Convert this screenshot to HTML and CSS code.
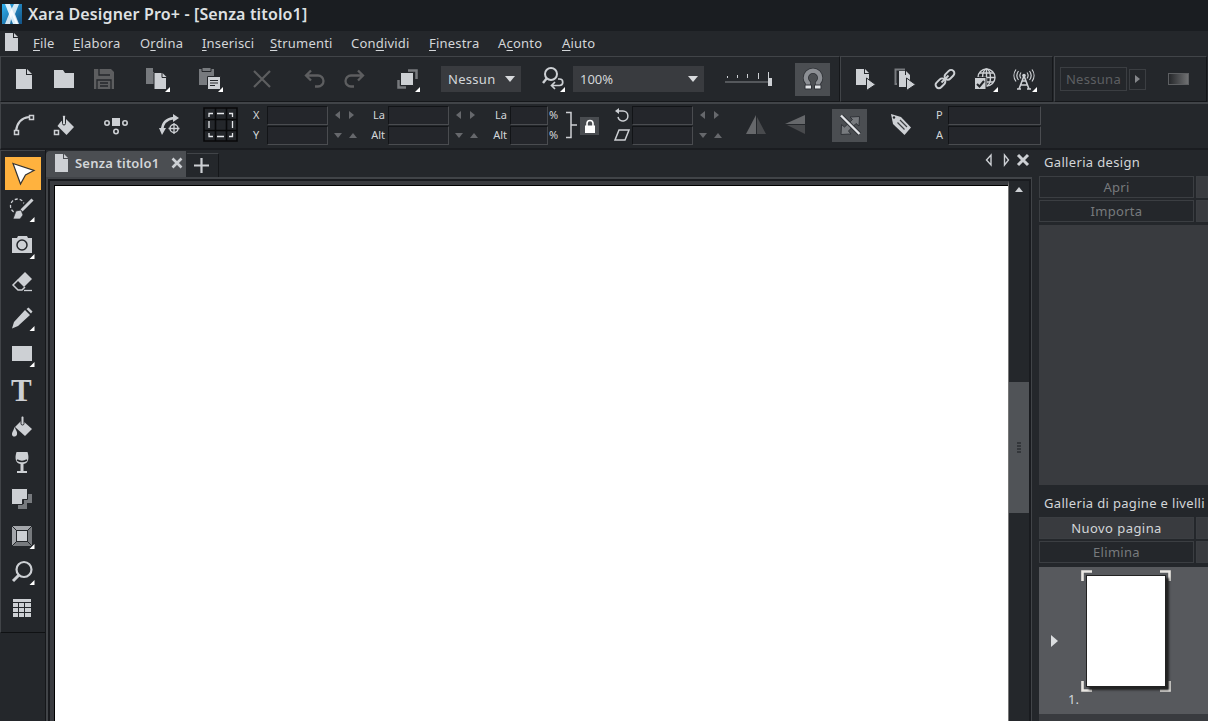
FILE: index.html
```html
<!DOCTYPE html>
<html lang="it">
<head>
  <meta charset="UTF-8">
  <meta name="viewport" content="width=device-width, initial-scale=1.0">
  <title>Xara Designer Pro+ - [Senza titolo1]</title>
  <link rel="stylesheet" href="styles.css">
</head>
<body>
  <div class="titlebar">
    <svg class="logo" width="20" height="20" viewBox="0 0 20 20">
      <defs>
        <linearGradient id="logoBg" x1="0" y1="0" x2="1" y2="1">
          <stop offset="0" stop-color="#2fb0ee"/><stop offset="1" stop-color="#125286"/>
        </linearGradient>
      </defs>
      <rect width="20" height="20" fill="url(#logoBg)"/>
      <path d="M3 0h5l8 20h-5z" fill="#d9effb"/>
      <path d="M12 0h5l-4 10 4 10h-3L10 11 8 20H3l4-10z" fill="#fff" opacity=".8"/>
    </svg>
    <span>Xara Designer Pro+ - [Senza titolo1]</span>
  </div>

  <div class="menubar">
    <svg class="menu-doc" width="14" height="18" viewBox="0 0 14 18"><path d="M0 0h8v5h5v13H0z"/><path d="M9 0l4 4H9z"/></svg>
    <span class="m1"><u>F</u>ile</span>
    <span class="m2"><u>E</u>labora</span>
    <span class="m3">O<u>r</u>dina</span>
    <span class="m4"><u>I</u>nserisci</span>
    <span class="m5"><u>S</u>trumenti</span>
    <span class="m6">Con<u>d</u>ividi</span>
    <span class="m7"><u>F</u>inestra</span>
    <span class="m8">A<u>c</u>onto</span>
    <span class="m9"><u>A</u>iuto</span>
  </div>

  <div class="toolbars">
    <div class="bar group-main">
      <svg class="ico" viewBox="0 0 28 28"><path d="M6 4h10v6h6v14H6z"/><path d="M17 4l5 5h-5z"/></svg>
      <svg class="ico" viewBox="0 0 28 28"><path d="M4 5h9l2 3h9v15H4z"/></svg>
      <svg class="ico off" viewBox="0 0 28 28"><path d="M4 4h17l3 3v17H4z"/><path d="M9 4v6h11M7 24v-9h14v9M10 18h8M10 21h8" fill="none" stroke="#24272b" stroke-width="1.300"/></svg>
      <svg class="ico copy" viewBox="0 0 28 28"><path class="mid" d="M2 3h7v4h4v12H2z"/><path d="M10 7.500h8v5h4.500v12H10z" stroke="#24272b"/><path d="M18.500 8l4 4h-4z"/><path class="more" d="M26 22v5h-5z"/></svg>
      <svg class="ico paste" viewBox="0 0 28 28"><path class="mid" d="M2 4h15v16H2z"/><path d="M5 2.500h9v4H5z" fill="#777a7e" stroke="#24272b"/><path d="M10.500 11.500h13v13h-13z" stroke="#24272b"/><path d="M13 15.500h8M13 18h8M13 20.500h5" stroke="#24272b"/><path class="more" d="M26 22v5h-5z"/></svg>
      <svg class="ico off del" viewBox="0 0 28 28"><path class="line" d="M6 6l16 16M22 6L6 22" stroke-width="2.200"/></svg>
      <svg class="ico off undo" viewBox="0 0 28 28"><path class="line" d="M11 5.500l-5 5 5 5M7 10.500h11a5 5 0 0 1 0 11h-3" stroke-width="2.300"/></svg>
      <svg class="ico off" viewBox="0 0 28 28"><path class="line" d="M18 5.500l5 5-5 5M22 10.500H11a5 5 0 0 0 0 11h3" stroke-width="2.300"/></svg>
      <svg class="ico arrange" viewBox="0 0 28 28"><path d="M14 5.500h8.500V14M4.500 15v7.500H12" fill="none" stroke="#777a7e" stroke-width="2.500"/><path d="M6.500 7.500h13v13h-13z" stroke="#24272b"/><path class="more" d="M26 22v5h-5z"/></svg>
      <div class="combo combo-q"><span>Nessun</span><i class="down"></i></div>
      <svg class="ico zoomprev" viewBox="0 0 28 28"><circle class="line" cx="12" cy="9" r="6" stroke-width="2"/><path class="line" d="M8 13l-4 5" stroke-width="2.400"/><path class="line" d="M19 14h1.500a3 3 0 0 1 0 6.500H13M16 17l-3.500 3.500L16 24" stroke-width="1.700"/><path class="more" d="M26 22v5h-5z"/></svg>
      <div class="combo combo-zoom"><span>100%</span><i class="down"></i></div>
      <svg class="slider" width="50" height="18" viewBox="0 0 50 18"><path d="M0 12h44" stroke="#55585c" stroke-width="2"/><path d="M2.500 6v2M12.500 5v3M22.500 4v4M33.500 3v6M43.500 2v6" stroke="#cdd0d4"/><path d="M43 8h4v8h-4z"/></svg>
      <div class="toggle magnet"><svg class="ico" viewBox="0 0 28 28"><path d="M9 22v-4c-1.500-1.500-2.200-3-2.200-5a7.200 7.200 0 0 1 14.400 0c0 2-.7 3.500-2.200 5v4" fill="none" stroke="#303338" stroke-width="6"/><path d="M9 22v-4c-1.500-1.500-2.200-3-2.200-5a7.200 7.200 0 0 1 14.400 0c0 2-.7 3.500-2.200 5v4" fill="none" stroke="#8c8f94" stroke-width="4.400"/><path d="M6 20h6.500v4H6zM15.500 20H22v4h-6.500z" fill="#e0e3e6" stroke="#303338"/></svg></div>
    </div>
    <div class="bar group-web">
      <svg class="ico" viewBox="0 0 28 28"><path d="M5 4h8v5h5v11H5z"/><path d="M14 4l4 4h-4z"/><path d="M15.500 13l9 6.500-9 6z" stroke="#24272b"/></svg>
      <svg class="ico" viewBox="0 0 28 28"><path d="M6 19H4.500V4.500H14" fill="none" stroke="#777a7e" stroke-width="2"/><path d="M8 6h6v4h5v12H8z"/><path d="M15 6l4 4h-4z"/><path d="M15.500 13l9 6.500-9 6z" stroke="#24272b"/></svg>
      <svg class="ico" viewBox="0 0 28 28"><g class="line" stroke-width="2"><rect x="13" y="6.500" width="11" height="6.500" rx="3.200" transform="rotate(-45 18.500 9.800)"/><rect x="4" y="15" width="11" height="6.500" rx="3.200" transform="rotate(-45 9.500 18.300)"/><path d="M10.500 17.500l7-7"/></g></svg>
      <svg class="ico" viewBox="0 0 28 28"><g class="line" stroke-width="1.400"><circle cx="15.500" cy="12.500" r="8.500"/><ellipse cx="15.500" cy="12.500" rx="4" ry="8.500"/><path d="M15.500 4v17M7 12.500h17M9 8h13M9 17h13"/></g><path d="M3.500 12.500h11.500v12H3.500z" stroke="#24272b"/><path d="M6 19l2.500 2.500L13 16" fill="none" stroke="#24272b" stroke-width="2"/><path class="more" d="M27 22v5h-5z"/></svg>
      <svg class="ico antenna" viewBox="0 0 28 28"><g class="line" stroke-width="1.600"><path d="M8 24l5-13 5 13M9 20h8M11 16h4M6 24h4M16 24h4"/><path d="M10 7.500a5 5 0 0 0 0 6M7.500 6a7.500 7.500 0 0 0 0 9M5 4.500a10 10 0 0 0 0 12M16 7.500a5 5 0 0 1 0 6M18.500 6a7.500 7.500 0 0 1 0 9M21 4.500a10 10 0 0 1 0 12" stroke-width="1.200"/></g><circle cx="13" cy="10.500" r="1.800"/><path class="more" d="M26 22v5h-5z"/></svg>
    </div>
    <div class="bar group-name">
      <div class="namebox">Nessuna</div>
      <div class="namearrow"><i class="right"></i></div>
      <div class="gradient"></div>
    </div>
  </div>

  <div class="infobar">
    <svg class="ico" viewBox="0 0 28 28"><path class="line" d="M6 20C7 12 11 7 19 6" stroke-width="2.200"/><path d="M4.500 19.500h4v4h-4zM19.500 4.500h4v4h-4z" fill="#24272b" stroke="#cdd0d4" stroke-width="1.500"/></svg>
    <svg class="ico" viewBox="0 0 28 28"><path d="M15 7l9 9-7.500 8-9-9 3-4z"/><rect x="12.500" y="4" width="3" height="10" rx="1.500" fill="#cdd0d4" stroke="#24272b"/><path d="M4.500 19.500h4v4h-4z" fill="#24272b" stroke="#cdd0d4" stroke-width="1.500"/></svg>
    <svg class="ico nodes" viewBox="0 0 28 28"><path d="M10 7h8v8h-8z"/><g class="line" stroke-width="1.600"><circle cx="5" cy="12" r="2.200"/><circle cx="23" cy="12" r="2.200"/><circle cx="14" cy="20.500" r="2.200"/></g></svg>
    <svg class="ico rot" viewBox="0 0 28 28"><path class="line" d="M6 20C6 13 10 8 18 7" stroke-width="2.400"/><path d="M17 3l6 4-6 4zM3 17h7l-4 7z"/><circle class="line" cx="18" cy="17.500" r="4" stroke-width="1.500"/><path class="line" d="M12.500 17.500h11M18 12v11" stroke-width="1.300"/></svg>
    <svg class="refgrid" width="36" height="36" viewBox="0 0 36 36"><path d="M1 1h33v33H1zM12.500 1v33M23.500 1v33M1 12.500h33M1 23.500h33" fill="none" stroke="#08090a" stroke-width="1.600"/><path d="M6 10V6.500h4M14 6.500h7M26 6.500h3.500V10M6 14v7M29.500 14v7M6 26v3.500h4M14 29.500h7M26 29.500h3.500V26" fill="none" stroke="#e4e6e9" stroke-width="1.300"/></svg>

    <div class="fields xy">
      <label>X</label><div class="field"></div><div class="spin"><i class="left"></i><i class="right"></i></div>
      <label>Y</label><div class="field"></div><div class="spin"><i class="down"></i><i class="up"></i></div>
    </div>
    <div class="fields size">
      <label>La</label><div class="field"></div><div class="spin"><i class="left"></i><i class="right"></i></div>
      <label>Alt</label><div class="field"></div><div class="spin"><i class="down"></i><i class="up"></i></div>
    </div>
    <div class="fields scale">
      <label>La</label><div class="field"></div><span>%</span>
      <label>Alt</label><div class="field"></div><span>%</span>
    </div>
    <svg class="bracket" width="13" height="28" viewBox="0 0 13 28"><path class="line" d="M1 1.500h5v25H1M6 14h6" stroke-width="1.500"/></svg>
    <div class="lock"><svg width="12" height="14" viewBox="0 0 12 14"><path d="M3 7V4.500a3 3 0 0 1 6 0V7" fill="none" stroke="#fff" stroke-width="1.600"/><path d="M1 6.500h10V14H1z" fill="#fff"/></svg></div>
    <div class="fields angle">
      <svg width="16" height="16" viewBox="0 0 16 16"><path class="line" d="M3.500 4H9a5 5 0 1 1-5 6" stroke-width="1.500"/><path d="M1 4l4-3v6z"/></svg><div class="field"></div><div class="spin"><i class="left"></i><i class="right"></i></div>
      <svg width="16" height="16" viewBox="0 0 16 16"><path class="line" d="M5 3h10l-4 10H1z" stroke-width="1.500"/></svg><div class="field"></div><div class="spin"><i class="down"></i><i class="up"></i></div>
    </div>
    <svg class="ico flip-h" viewBox="0 0 28 28"><path class="mid2" d="M14 4v19H4z"/><path class="dim" d="M15 6l9 17h-9z"/></svg>
    <svg class="ico" viewBox="0 0 28 28"><path class="mid2" d="M24 4v9H4z"/><path class="dim" d="M6 14h18v9z"/></svg>
    <div class="toggle scalelines"><svg class="ico" viewBox="0 0 28 28"><path class="mid" d="M14 6l9.500-.5-.5 9.500-3-2.500-7.500 7.500 2.500 3-10 .5.500-10 3 2.500 8-7.500z" stroke="#303338"/><path d="M5.500 5l18 18" stroke="#303338" stroke-width="4.500"/><path d="M5 4.500l18.500 18.500" stroke="#e4e6e9" stroke-width="2.400"/></svg></div>
    <svg class="ico tag" viewBox="0 0 28 28"><path d="M4 3l10 3 10 10.500-6.500 7.500L6 13z"/><circle cx="7" cy="6.500" r="1.200" fill="#24272b"/><path d="M10.500 11.500l7 7M13 9l7 7" stroke="#3c3f43" stroke-width="1.200"/></svg>
    <div class="fields pa">
      <label>P</label><div class="field"></div>
      <label>A</label><div class="field"></div>
    </div>
  </div>

  <div class="work">
    <div class="side">
      <div class="toolbox">
        <div class="tool active"><svg class="ico" viewBox="0 0 28 28"><path d="M4 3.500l21 7-8.500 4.500L11.500 24z" fill="#fff" stroke="#333" stroke-width="1.200"/></svg></div>
        <div class="tool"><svg class="ico" viewBox="0 0 28 28"><circle class="line" cx="9.500" cy="11" r="7" stroke-width="1.300" stroke-dasharray="3 2"/><path class="bgline" d="M13 16L24 4" stroke-width="6"/><path class="line" d="M13.500 15.500L24.500 4.500" stroke-width="3"/><path d="M5 24l3-8 5-1 2 5-3 4z" stroke="#24272b" stroke-width=".7"/><path class="more" d="M26.500 22v5h-5z"/></svg></div>
        <div class="tool"><svg class="ico" viewBox="0 0 28 28"><path d="M4 6h5l1-2h9l1 2h4v15H4z"/><circle cx="14" cy="13" r="5" fill="none" stroke="#24272b" stroke-width="1.500"/><path class="more" d="M26.500 22v5h-5z"/></svg></div>
        <div class="tool"><svg class="ico" viewBox="0 0 28 28"><path d="M17 4l7 7-8 8-7-7z"/><path class="line" d="M10 12l-5 5 5 5h4l3-3" stroke-width="1.500"/><path class="line" d="M16 22.500h8" stroke-width="1.300"/></svg></div>
        <div class="tool"><svg class="ico" viewBox="0 0 28 28"><path d="M17 6l5 5L10 22l-6 2.500 2-6.500zM18.500 5l2-1.500 4 4-1.500 2z"/><path class="more" d="M26.500 22v5h-5z"/></svg></div>
        <div class="tool"><svg class="ico" viewBox="0 0 28 28"><path d="M4 6h20v15H4z"/><path class="more" d="M26.500 22v5h-5z"/></svg></div>
        <div class="tool tool-text">T</div>
        <div class="tool"><svg class="ico" viewBox="0 0 28 28"><path d="M14 7l10 9-7 7-10-9z"/><rect x="13" y="3" width="3" height="9" rx="1.500" stroke="#24272b"/><path d="M6.500 14c2 4 3 5 2.500 7.500C8 24.500 4 24 4 21.500 4 19 5.500 18 6.500 14z"/></svg></div>
        <div class="tool"><svg class="ico" viewBox="0 0 28 28"><path d="M8.500 3h11c2 6 1 11.500-4 12v7H19v2H9v-2h3.500v-7c-5-.5-6-6-4-12z"/><path d="M9 11q5 3 10 0" fill="none" stroke="#24272b" stroke-width="1.500"/></svg></div>
        <div class="tool"><svg class="ico" viewBox="0 0 28 28"><path class="mid" d="M10 24v-5h6v-10h8v9h-5v6z"/><path d="M3.500 3.500h16v11h-5v5h-11z" stroke="#24272b"/></svg></div>
        <div class="tool"><svg class="ico" viewBox="0 0 28 28"><path d="M4 4h20v20H4z" fill="#777a7e"/><path d="M4 4h20l-5 5H9v10l-5 5z" fill="#a3a6aa"/><path d="M8.500 8.500h11v11h-11z" stroke="#24272b"/><path d="M4 4l5 5M24 4l-5 5M4 24l5-5M24 24l-5-5" stroke="#24272b"/><path class="more" d="M26.500 22v5h-5z"/></svg></div>
        <div class="tool"><svg class="ico" viewBox="0 0 28 28"><circle class="line" cx="16" cy="11.500" r="7.500" stroke-width="2.200"/><path class="line" d="M11 17l-6 6" stroke-width="3"/><path class="more" d="M26.500 22v5h-5z"/></svg></div>
        <div class="tool"><svg class="ico" viewBox="0 0 28 28"><path d="M5 5h18v18H5z"/><path d="M5 8.500h18M5 13.500h18M5 18.500h18M10.500 9v14M16.500 9v14" stroke="#24272b"/></svg></div>
      </div>
    </div>

    <div class="document">
      <div class="tabs">
        <div class="tab">
          <svg width="14" height="18" viewBox="0 0 14 18"><path d="M0 0h8v5h5v13H0z"/><path d="M9 0l4 4H9z"/></svg>
          <span>Senza titolo1</span>
          <svg width="12" height="12" viewBox="0 0 12 12"><path class="line" d="M1.500 1.500l9 9M10.500 1.500l-9 9" stroke-width="2.600"/></svg>
        </div>
        <div class="newtab"><svg width="15" height="15" viewBox="0 0 15 15"><path d="M0 7.500h15M7.500 0v15" stroke="#cdd0d4" stroke-width="2.200"/></svg></div>
        <svg class="tabnav" width="46" height="14" viewBox="0 0 46 14"><path class="line" d="M7 2v10L2.500 7zM20.500 2v10l4-5z" stroke-width="1.400"/><path class="line" d="M34 2l10 10M44 2L34 12" stroke-width="3"/></svg>
      </div>
      <div class="frame">
        <div class="canvas"></div>
        <div class="scroll">
          <i class="up"></i>
          <div class="thumb"><b></b><b></b><b></b><b></b></div>
        </div>
      </div>
    </div>

    <div class="galleries">
      <h2>Galleria design</h2>
      <div class="buttons">
        <div class="btn dis">Apri</div><div class="btn"></div>
        <div class="btn dis">Importa</div><div class="btn"></div>
      </div>
      <div class="gallery"></div>
      <h2 class="pages-title">Galleria di pagine e livelli</h2>
      <div class="buttons">
        <div class="btn">Nuovo pagina</div><div class="btn"></div>
        <div class="btn dis">Elimina</div><div class="btn"></div>
      </div>
      <div class="pages">
        <i class="right"></i>
        <span class="num">1.</span>
        <div class="selection">
          <svg width="90" height="122" viewBox="0 0 90 122"><path d="M1.500 11V1.500H11M79 1.500h9.500V11M88.500 111v9.500H79M11 120.500H1.500V111" fill="none" stroke="#e9e6e2" stroke-width="2.600"/></svg>
          <div class="page"></div>
        </div>
      </div>
      <div class="rest"></div>
    </div>
  </div>
</body>
</html>
```
FILE: styles.css
```css
:root {
  --bg: #24272b;
  --dark: #15171a;
  --line: #414448;
  --panel: #393b3f;
  --active: #4b4e52;
  --icon: #cdd0d4;
}
* {
  box-sizing: border-box;
}
body {
  margin: 0;
  height: 721px;
  overflow: hidden;
  display: flex;
  flex-direction: column;
  background: var(--bg);
  color: #d3d6d9;
  font-family: "Noto Sans", "Open Sans", sans-serif;
  font-size: 13px;
}
svg {
  display: block;
  flex: none;
  fill: var(--icon);
}
.line {
  fill: none;
  stroke: var(--icon);
}
.bgline { stroke: var(--bg); }
.mid { fill: #777a7e; }
.mid2 { fill: #66686b; }
.dim { fill: #484a4d; }
.more { fill: #fff; }
.off { fill: #5d5e60; }
.off .line { stroke: #5d5e60; }
.ico {
  width: 28px;
  height: 28px;
  margin: 0 6px;
}

/* small triangles */
i {
  width: 0;
  height: 0;
  border: 4px solid transparent;
}
i.down { border-top: 5px solid #66686c; border-bottom: 0; }
i.up { border-bottom: 5px solid #66686c; border-top: 0; }
i.left { border-right: 5px solid #66686c; border-left: 0; }
i.right { border-left: 5px solid #66686c; border-right: 0; }

/* title and menu */
.titlebar {
  height: 31px;
  flex: none;
  display: flex;
  align-items: center;
  gap: 6px;
  padding: 0 2px 4px;
  background: #1a1d21;
  color: #dfe1e3;
  font-size: 16px;
  font-weight: 600;
  letter-spacing: .15px;
}
.titlebar span { padding-top: 1px; }
.menubar {
  height: 25px;
  flex: none;
  display: flex;
  align-items: center;
  padding: 0 0 1px 5px;
  letter-spacing: .2px;
}
.menubar span {
  flex: none;
  white-space: nowrap;
}
.menubar u { text-underline-offset: 2px; }
.menu-doc { margin: -2px 14px 0 0; }
.m1 { width: 40px; }
.m2 { width: 67px; }
.m3 { width: 62px; }
.m4 { width: 68px; }
.m5 { width: 81px; }
.m6 { width: 78px; }
.m7 { width: 69px; }
.m8 { width: 64px; }

/* toolbars */
.toolbars {
  display: flex;
  height: 46px;
  flex: none;
}
.bar {
  display: flex;
  align-items: center;
  border-top: 1px solid var(--line);
  border-left: 1px solid var(--line);
  border-bottom: 1px solid var(--dark);
  border-right: 1px solid var(--dark);
}
.group-main { width: 840px; padding-left: 3px; }
.group-web { width: 213px; padding-left: 4px; }
.group-name { width: 153px; margin-left: 1px; padding-left: 5px; }
.copy { margin-left: 20px; }
.paste { margin-left: 19px; }
.del { margin-left: 17px; }
.undo { margin-left: 18px; }
.arrange { margin-left: 20px; }
.combo {
  height: 26px;
  flex: none;
  display: flex;
  align-items: center;
  justify-content: space-between;
  padding: 0 6px 1px 7px;
  background: var(--panel);
  letter-spacing: .3px;
}
.combo i.down {
  border-width: 6px 5px 0;
  border-top-color: #d8dadd;
}
.combo-q { width: 80px; margin-left: 13px; }
.zoomprev { margin-left: 18px; }
.combo-zoom { width: 131px; letter-spacing: 0; }
.slider { margin: 0 20px 0 21px; }
.toggle {
  width: 35px;
  height: 33px;
  flex: none;
  display: flex;
  align-items: center;
  justify-content: center;
  background: var(--active);
}
.toggle .ico { margin: 0; }
.namebox,
.namearrow {
  height: 24px;
  display: flex;
  align-items: center;
  justify-content: center;
  border: 1px solid #3b3e42;
  color: #5d5f62;
}
.namebox { width: 67px; letter-spacing: .3px; }
.namearrow { width: 17px; margin-left: 2px; height: 21px; }
.namearrow i.right { border-left-color: #85878b; }
.gradient {
  width: 21px;
  height: 12px;
  margin-left: 22px;
  border: 1px solid #5d5f62;
  background: linear-gradient(90deg, #26282b, #707173);
}

.infobar {
  height: 48px;
  flex: none;
  display: flex;
  align-items: center;
  padding: 0 0 2px 3px;
  border-top: 2px solid var(--line);
  border-left: 1px solid var(--line);
  border-bottom: 2px solid #1a1c20;
}
.nodes { margin-left: 18px; }
.rot { margin-left: 20px; margin-right: 0; }
.refgrid { margin-left: 19px; }
.fields {
  flex: none;
  display: grid;
  grid-template-rows: 19px 19px;
  row-gap: 1px;
  align-items: center;
  font-size: 11px;
  line-height: 18px;
}
.field {
  height: 19px;
  background: #24262b;
  border: 1px solid #121417;
  border-right-color: #4a4c50;
  border-bottom-color: #4a4c50;
}
.spin {
  display: flex;
  gap: 9px;
  padding-left: 7px;
  align-items: center;
}
.spin i.down,
.spin i.up {
  margin: 0 -1px;
}
.xy { margin-left: 14px; grid-template-columns: 14px 61px 43px; }
.size { grid-template-columns: 17px 61px 44px; }
.size label,
.scale label {
  padding-right: 3px;
  text-align: right;
}
.scale { grid-template-columns: 17px 38px 17px; }
.scale span { padding-left: 1px; }
.bracket { margin-left: 0; }
.lock {
  width: 19px;
  height: 18px;
  margin: 2px 15px 0 2px;
  display: flex;
  align-items: center;
  justify-content: center;
  background: #494c50;
}
.angle { grid-template-columns: 18px 61px 42px; }
.flip-h { margin-left: 7px; }
.flip-h + .ico { margin-left: 5px; }
.scalelines { margin: 0 14px 0 17px; }
.tag { margin-right: 21px; }
.pa { grid-template-columns: 12px 93px; }

/* work area */
.work {
  flex: 1;
  min-height: 0;
  display: flex;
}
.side {
  width: 46px;
  flex: none;
  border-right: 1px solid var(--dark);
}
.toolbox {
  height: 483px;
  padding-top: 4px;
  border-left: 1px solid var(--line);
  border-top: 1px solid var(--line);
  border-bottom: 1px solid #0f1113;
}
.tool {
  height: 36.25px;
  display: flex;
  align-items: center;
  padding-left: 1px;
}
.tool.active {
  width: 36px;
  height: 33px;
  margin: 2px 0 1.25px 4px;
  background: #ffb23e;
}
.tool.active .ico { margin: 0 0 0 3px; }
.tool-text {
  padding-left: 10px;
  color: var(--icon);
  font: bold 31px/30px "Liberation Serif", serif;
}
.document {
  width: 986px;
  flex: none;
  display: flex;
  flex-direction: column;
}
.tabs {
  height: 27px;
  flex: none;
  display: flex;
  align-items: flex-end;
}
.tab {
  width: 140px;
  height: 26px;
  display: flex;
  align-items: center;
  gap: 6px;
  padding: 0 0 2px 9px;
  border-radius: 4px 0 0 0;
  background: var(--active);
}
.tab span {
  width: 90px;
  font-weight: 600;
  letter-spacing: .2px;
  white-space: nowrap;
}
.newtab {
  width: 32px;
  height: 24px;
  margin-left: 1px;
  padding: 4px 0 0 7px;
  border-top: 1px solid var(--line);
  border-right: 1px solid var(--dark);
}
.tabnav { margin: 0 0 10px 765px; }
.frame {
  flex: 1;
  display: flex;
  border: 2px solid var(--line);
  border-bottom: 0;
  border-right-width: 1px;
  background: #191b1f;
  padding: 2px 0 0 2px;
}
.canvas {
  width: 959px;
  flex: none;
  background: #fff;
  border: 4px solid var(--panel);
  border-right: 1px solid #777;
  border-bottom: 0;
  box-shadow: inset 1px 1px 0 #000;
}
.scroll {
  flex: 1;
  display: flex;
  flex-direction: column;
  align-items: center;
  padding-top: 6px;
  background: var(--bg);
  border-right: 2px solid #191b1f;
}
.scroll i.up { border-bottom-color: #cdd0d4; }
.thumb {
  width: 20px;
  height: 131px;
  margin-top: 190px;
  display: flex;
  flex-direction: column;
  align-items: center;
  justify-content: center;
  gap: 1px;
  background: #505357;
}
.thumb b {
  width: 4px;
  height: 2px;
  background: #34373b;
}

/* right galleries */
.galleries {
  flex: 1;
  min-width: 0;
  padding-left: 7px;
  display: flex;
  flex-direction: column;
}
h2 {
  height: 26px;
  flex: none;
  margin: 0;
  padding-left: 5px;
  font-size: 13px;
  font-weight: 400;
  letter-spacing: .33px;
  line-height: 25px;
  white-space: nowrap;
}
.buttons {
  display: grid;
  grid-template-columns: 155px 12px;
  gap: 2px;
}
.btn {
  height: 22px;
  line-height: 20px;
  text-align: center;
  letter-spacing: .45px;
  background: var(--panel);
  border: 1px solid #3b3e42;
}
.btn.dis {
  background: none;
  color: #777a7d;
  letter-spacing: .3px;
}
.gallery {
  height: 260px;
  flex: none;
  margin-top: 3px;
  background: var(--panel);
}
.pages-title {
  height: 32px;
  padding-top: 6px;
}
.pages {
  height: 147px;
  flex: none;
  display: flex;
  align-items: center;
  margin-top: 4px;
  padding-left: 12px;
  background: #57595d;
}
.pages i.right {
  border-width: 6px 0 6px 7px;
  border-left-color: #dcdee0;
}
.pages .num {
  width: 23px;
  padding-left: 10px;
  align-self: flex-end;
  margin-bottom: 6px;
}
.selection {
  display: grid;
  margin-bottom: 19px;
}
.selection svg,
.page {
  grid-area: 1 / 1;
}
.page {
  margin: 5px;
  width: 80px;
  height: 112px;
  background: #fff;
  border: 1px solid #222;
  box-shadow: 3px 3px 2px #222;
}
.rest {
  flex: 1;
  background: var(--panel);
}
```
